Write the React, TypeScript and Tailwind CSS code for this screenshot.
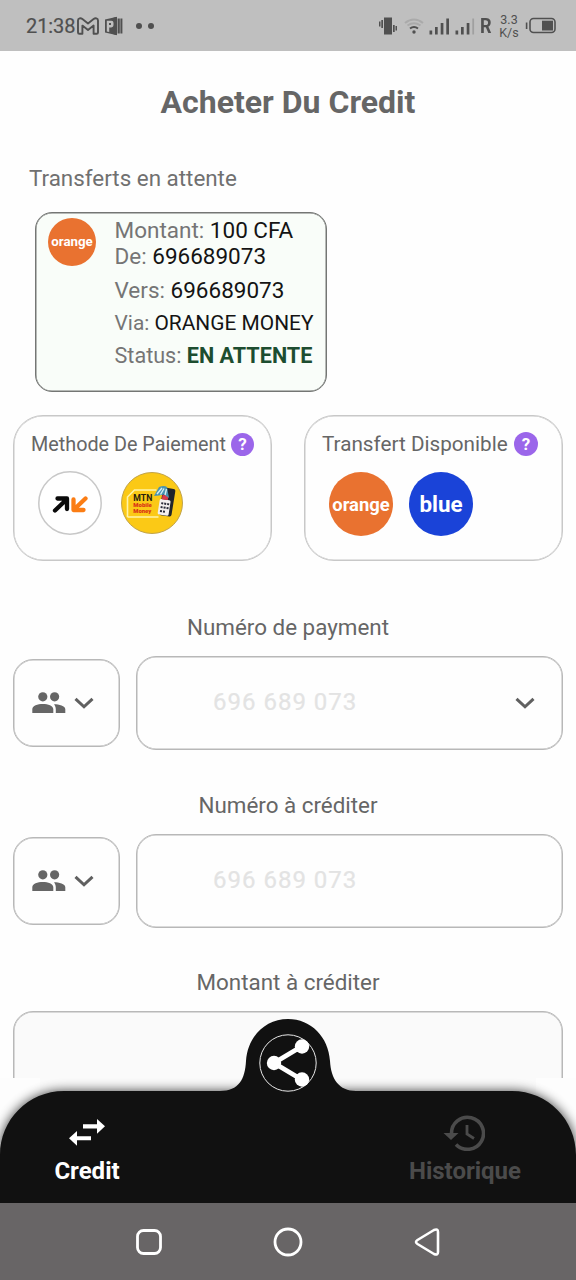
import type { ReactNode } from "react";

const FONT = "font-['Roboto','Liberation_Sans',sans-serif]";
const FIELD_BORDER = "border border-[#b8b8b8] shadow-[inset_0_0_0_0.5px_#b8b8b8]";
const PANEL_BORDER = "border border-[#c8c8c8] shadow-[inset_0_0_0_0.5px_#c8c8c8]";

function StatusBar() {
  return (
    <header className="flex h-[51px] shrink-0 items-center justify-between bg-[#bfbfbf] pl-[26px] pr-[19px] text-[#505050]">
      <div className="flex items-center">
        <span className="w-[51px] whitespace-nowrap text-[20px] leading-6 tracking-[-0.1px] [-webkit-text-stroke:0.2px_#505050]">21:38</span>
        <svg width="22" height="18" viewBox="0 0 22 18" fill="none" stroke="currentColor" strokeWidth="1.9" strokeLinejoin="round">
          <path d="M1 3.600v11.800q0 1.400 1.400 1.400h3V8.600l5.600 4.300 5.600-4.300v8.200h3q1.400 0 1.400-1.400V3.600C21 1 18.300 .8 16.600 2.100L11 6.400 5.400 2.100C3.700 .8 1 1 1 3.600z" />
        </svg>
        <svg className="ml-[5px]" width="20" height="20" viewBox="0 0 20 20" fill="currentColor">
          <path d="M1 3.500 12 1v18L1 16.500z" />
          <path d="M2.800 4.800h4.400c3.900 0 3.900 6.600 0 6.600H5.200v4.600L2.800 15.500z" fill="#bfbfbf" />
          <path d="M5 6.900h2v2.200H5z" />
          <path d="M9.500 1.800 13 .8v18.400L9.500 18.200zM13.600 2.500h2.200v15h-2.200zM16.400 2.500h2v15h-2z" />
        </svg>
        <span className="ml-[12px] size-[6px] rounded-full bg-current" />
        <span className="ml-[6px] size-[6px] rounded-full bg-current" />
      </div>
      <div className="flex items-center">
        <svg width="20" height="20" viewBox="0 0 20 20" fill="currentColor">
          <path d="M6 1.500h8v17H6zM3.300 4h1.700v8H3.300zM1 5.500h1.500v5H1zM15 9h1.700v7H15zM17.500 10H19v4.500h-1.500z" />
        </svg>
        <svg className="ml-[6px]" width="20" height="18" viewBox="0 0 20 18" fill="none" strokeWidth="2">
          <path d="M1 6q9-7 18 0" stroke="#aaa" />
          <path d="M3.500 8.500q6.500-4.500 13 0" stroke="#aaa" />
          <path d="M6 11.500q4-3 8 0" stroke="currentColor" />
          <circle cx="10" cy="15" r="1.700" fill="currentColor" />
        </svg>
        <svg className="ml-[5px]" width="22" height="18" viewBox="0 0 22 18" fill="currentColor">
          <path d="M.5 13.500h2.700v4H.5zM6 10h2.700v7.500H6zM11.700 6h2.700v11.500h-2.700zM17.300 1.500H20v16h-2.700z" />
        </svg>
        <svg className="ml-[4px]" width="20" height="18" viewBox="0 0 20 18" fill="currentColor">
          <path d="M.5 13.500h2.700v4H.5zM6 10h2.700v7.500H6zM11.700 6h2.700v11.500h-2.700z" />
          <path d="M17.300 1.500h1.800v16h-1.800z" fill="#a0a0a0" />
        </svg>
        <span className="ml-[5px] w-[18px] origin-left scale-x-[0.86] text-[21px] font-bold leading-6">R</span>
        <span className="flex w-[22px] flex-col items-center text-[12.5px] leading-[13px]">
          <span>3.3</span>
          <span>K/s</span>
        </span>
        <svg className="ml-[5px]" width="32" height="18" viewBox="0 0 32 18" fill="none">
          <path d="M.8 5.500h1.600v6.500H.8z" fill="currentColor" />
          <rect x="5" y="1.500" width="25" height="14" rx="3.500" stroke="currentColor" strokeWidth="1.600" />
          <path d="M17 3.700h11v9.800H17z" fill="currentColor" />
        </svg>
      </div>
    </header>
  );
}

function Detail({ label, className, children }: { label: string; className: string; children: ReactNode }) {
  return (
    <p className={`whitespace-nowrap text-[#757575] ${className}`}>
      {label} <span className="text-[#141414]">{children}</span>
    </p>
  );
}

function Help({ className }: { className: string }) {
  return (
    <span className={`flex shrink-0 items-center justify-center rounded-full bg-[#9b66ea] text-[17px] font-bold leading-none text-white ${className}`}>
      ?
    </span>
  );
}

function OrangeMoney() {
  return (
    <svg width="64" height="64" viewBox="0 0 64 64" fill="none">
      <circle cx="32" cy="32" r="31.200" fill="#fff" stroke="#c8c8c8" strokeWidth="1.500" />
      <g strokeWidth="4.300" strokeLinecap="round" strokeLinejoin="round">
        <path d="M17 39.500 28.500 28.500M19.500 27.500h9.500v10.500" stroke="#0a0a0a" />
        <path d="M47.500 27.500 36 38.500M35.500 28.500v10.500h10" stroke="#fb7d14" />
      </g>
    </svg>
  );
}

function MtnMoney() {
  return (
    <svg width="62" height="62" viewBox="0 0 62 62">
      <circle cx="31" cy="31" r="30.500" fill="#fbc916" stroke="#c1a34a" />
      <path d="M6.500 45V25l7-7h22M6.500 45h31" fill="none" stroke="#fff3a8" strokeWidth="1.600" />
      <g transform="rotate(9 46 30)">
        <rect x="40" y="16" width="12.500" height="28" rx="2" fill="#20242b" />
        <rect x="38.500" y="28" width="11" height="15.500" rx="1.500" fill="#f4f0ef" />
        <path d="M40.500 31h2v2h-2zM43.500 31h2v2h-2zM46.500 31h2v2h-2zM40.500 35h2v2h-2zM43.500 35h2v2h-2zM46.500 35h2v2h-2zM40.500 39h2v2h-2zM43.500 39h2v2h-2z" fill="#2b2b38" />
        <path d="M40.500 23.500h6v4.500h-6z" fill="#dc3a4a" />
      </g>
      <path d="m33 24 5-9q5-2 8 0l2 11-5-3.500-5 1z" fill="#4a93b0" />
      <path d="m36 22 5-6M39.500 22.500l3.500-6M44 23l1.500-6" stroke="#d5eef1" strokeWidth="1.400" />
      <text x="12.300" y="29" fontSize="9.500" fontWeight="700" fill="#27200c" textLength="19" lengthAdjust="spacingAndGlyphs">MTN</text>
      <text x="12.300" y="35.300" fontSize="6.200" fontWeight="900" fill="#d93416" textLength="18.500" lengthAdjust="spacingAndGlyphs">Mobile</text>
      <text x="12.300" y="41.300" fontSize="6.200" fontWeight="900" fill="#d93416" textLength="18" lengthAdjust="spacingAndGlyphs">Money</text>
    </svg>
  );
}

function Chevron({ className }: { className: string }) {
  return (
    <svg className={className} width="20" height="14" viewBox="0 0 20 14" fill="none" stroke="#606060" strokeWidth="3">
      <path d="m1.500 2.800 8.500 8 8.500-8" />
    </svg>
  );
}

function PhoneRow({ chevron }: { chevron?: boolean }) {
  return (
    <div className="mx-[13px] flex h-[94px] shrink-0 items-center justify-between">
      <button className={`flex h-[88px] w-[107px] items-center rounded-[20px] pl-[18px] ${FIELD_BORDER}`}>
        <svg width="34" height="22" viewBox="0 0 34 22" fill="#666">
          <circle cx="10.800" cy="4.800" r="4.600" />
          <circle cx="22.600" cy="4.800" r="4.600" />
          <path d="M.3 21v-3.700c0-7 21-7 21 0V21zM22 12.200c5 0 11.300 1.500 11.300 5.100V21h-9.500v-3.700c0-2.200-.8-3.800-1.800-5.100z" />
        </svg>
        <Chevron className="ml-[8px]" />
      </button>
      <div className={`flex h-[94px] w-[427px] items-center justify-between rounded-[20px] pl-[76px] pr-[27px] ${FIELD_BORDER}`}>
        <span className="mb-[2px] whitespace-nowrap text-[24px] leading-7 tracking-[1px] text-[#e3e3e3] [-webkit-text-stroke:0.2px_#e3e3e3]">696 689 073</span>
        {chevron && <Chevron className="" />}
      </div>
    </div>
  );
}

function TabBar() {
  return (
    <nav className="relative h-[125px] shrink-0 bg-[#fdfdfd]">
      <div className="absolute -top-[78px] left-0 h-[203px] w-[576px] overflow-hidden">
        <svg width="576" height="203" viewBox="0 1000 576 203">
          <defs>
            <filter id="soft" x="-10%" y="-30%" width="120%" height="160%">
              <feGaussianBlur stdDeviation="6" />
            </filter>
            <clipPath id="lower">
              <path d="M0 1078h576v125H0z" />
            </clipPath>
          </defs>
          <path d="M40 1078h496v16H40z" fill="#fafafa" />
          <g clipPath="url(#lower)">
            <path d="M0 1203V1153c0-34 28-62 64-62h448c36 0 64 28 64 62v50z" fill="#000" opacity=".75" filter="url(#soft)" />
          </g>
          <path d="M0 1203V1155C0 1120 28 1091 64 1091H220C239 1091 245 1079 246 1061C247.500 1037 265 1019 288 1019S328.500 1037 330 1061C331 1079 339 1091 356 1091H512C548 1091 576 1120 576 1155V1203z" fill="#111" />
          <circle cx="288" cy="1063" r="28.200" fill="none" stroke="#e8e8e8" />
          <path d="m301.500 1046.500-27.500 16.500 27.500 16.500" fill="none" stroke="#fff" strokeWidth="4.800" />
          <g fill="#fff">
            <circle cx="274" cy="1063" r="7.200" />
            <circle cx="302" cy="1046.500" r="7.200" />
            <circle cx="302" cy="1079.500" r="7.200" />
          </g>
        </svg>
      </div>
      <div className="relative flex h-full items-end justify-between pb-[17px] text-[24px] font-bold leading-[30px] text-white">
        <div className="flex w-[174px] flex-col items-center">
          <svg width="38" height="28" viewBox="0 0 38 28" fill="#fff">
            <path d="M15 6.300h14V1l8 7.300-8 7.400v-5.300H15zM23 18.200H9v-5.300L1 20.200l8 7.500v-5.400h14z" />
          </svg>
          <span className="mt-[10px]">Credit</span>
        </div>
        <div className="flex w-[222px] flex-col items-center text-[#4b4b4b]">
          <svg className="mr-[2px]" width="42" height="37" viewBox="0 0 42 37" fill="none" stroke="currentColor" strokeWidth="3.600">
            <path d="M8.500 20A16 16 0 1 1 13 30.500" />
            <path d="M24 11v9l7 4.500" strokeWidth="2.800" />
            <path d="M.5 19h15L8 26z" fill="currentColor" stroke="none" />
          </svg>
          <span className="mt-[5px]">Historique</span>
        </div>
      </div>
    </nav>
  );
}

const LABEL = "mb-[15px] h-[28px] text-center text-[22.4px] leading-[28px]";

export default function App() {
  return (
    <div className={`flex h-[1280px] w-[576px] flex-col overflow-hidden bg-white text-[#666] ${FONT}`}>
      <StatusBar />
      <main className="flex h-[1027px] shrink-0 flex-col overflow-hidden bg-[#fefefe]">
        <h1 className="mt-[31px] h-[40px] text-center text-[32px] font-bold leading-[40px]">Acheter Du Credit</h1>
        <h2 className="ml-[29px] mt-[42px] h-[28px] text-[22.4px] leading-[28px] text-[#707070]">Transferts en attente</h2>

        <section className="ml-[35px] mt-[20px] flex h-[180px] w-[292px] shrink-0 rounded-[17px] border border-[#747674] bg-[#f9fdf9] p-px shadow-[inset_0_0_0_0.5px_#747674]">
          <div className="ml-[11px] mt-[4px] flex size-[48px] shrink-0 items-center justify-center rounded-full bg-[#e97230] text-[13.3px] font-bold text-white">
            orange
          </div>
          <div className="ml-[18.500px] mt-[4px]">
            <Detail label="Montant:" className="text-[22.5px] leading-[25px]">100 CFA</Detail>
            <Detail label="De:" className="text-[22.5px] leading-[26px]">696689073</Detail>
            <Detail label="Vers:" className="mt-[8px] text-[22.5px] leading-[26px]">696689073</Detail>
            <Detail label="Via:" className="mt-[7px] text-[20.9px] leading-[26px]">ORANGE MONEY</Detail>
            <Detail label="Status:" className="mt-[7px] text-[21.6px] leading-[26px]">
              <b className="text-[#1d4d30]">EN ATTENTE</b>
            </Detail>
          </div>
        </section>

        <div className="mx-[13px] mt-[23px] flex h-[146px] shrink-0 justify-between">
          <section className={`w-[259px] rounded-[30px] p-px ${PANEL_BORDER}`}>
            <div className="ml-[16px] mt-[14px] flex h-[26px] items-center justify-between pr-[16px]">
              <h3 className="whitespace-nowrap pt-[2px] text-[19.8px]">Methode De Paiement</h3>
              <Help className="size-[23px]" />
            </div>
            <div className="ml-[23px] mt-[14px] flex items-center gap-[19px]">
              <OrangeMoney />
              <MtnMoney />
            </div>
          </section>
          <section className={`w-[259px] rounded-[30px] p-px ${PANEL_BORDER}`}>
            <div className="ml-[16px] mt-[14px] flex h-[26px] items-center justify-between pr-[23px]">
              <h3 className="whitespace-nowrap pt-[2px] text-[20.7px]">Transfert Disponible</h3>
              <Help className="size-[24px]" />
            </div>
            <div className="ml-[23px] mt-[15px] flex items-center gap-[16px] font-bold text-white">
              <div className="flex size-[64px] items-center justify-center rounded-full bg-[#e97230] pt-px text-[18.4px]">orange</div>
              <div className="flex size-[64px] items-center justify-center rounded-full bg-[#1a43d8] pt-[2px] text-[22.4px]">blue</div>
            </div>
          </section>
        </div>

        <h3 className={`mt-[52px] ${LABEL}`}>Numéro de payment</h3>
        <PhoneRow chevron />
        <h3 className={`mt-[41px] ${LABEL}`}>Numéro à créditer</h3>
        <PhoneRow />
        <h3 className={`mt-[40px] ${LABEL}`}>Montant à créditer</h3>
        <div className={`mx-[13px] h-[94px] shrink-0 rounded-[20px] bg-[#fafafa] ${FIELD_BORDER}`} />
      </main>
      <TabBar />
      <footer className="flex h-[77px] shrink-0 items-center bg-[#686566]">
        <svg className="ml-[135px]" width="28" height="28" viewBox="0 0 28 28" fill="none" stroke="#fff" strokeWidth="2.800">
          <rect x="2.500" y="2.500" width="23" height="23" rx="6" />
        </svg>
        <svg className="ml-[110px]" width="30" height="30" viewBox="0 0 30 30" fill="none" stroke="#fff" strokeWidth="2.800">
          <circle cx="15" cy="15" r="13" />
        </svg>
        <svg className="ml-[111px]" width="28" height="30" viewBox="0 0 28 30" fill="none" stroke="#fff" strokeWidth="2.600" strokeLinejoin="round">
          <path d="M3.500 13 20 3q4-1.800 4 2v20q0 3.800-4 2L3.500 17q-3-2 0-4z" />
        </svg>
      </footer>
    </div>
  );
}
